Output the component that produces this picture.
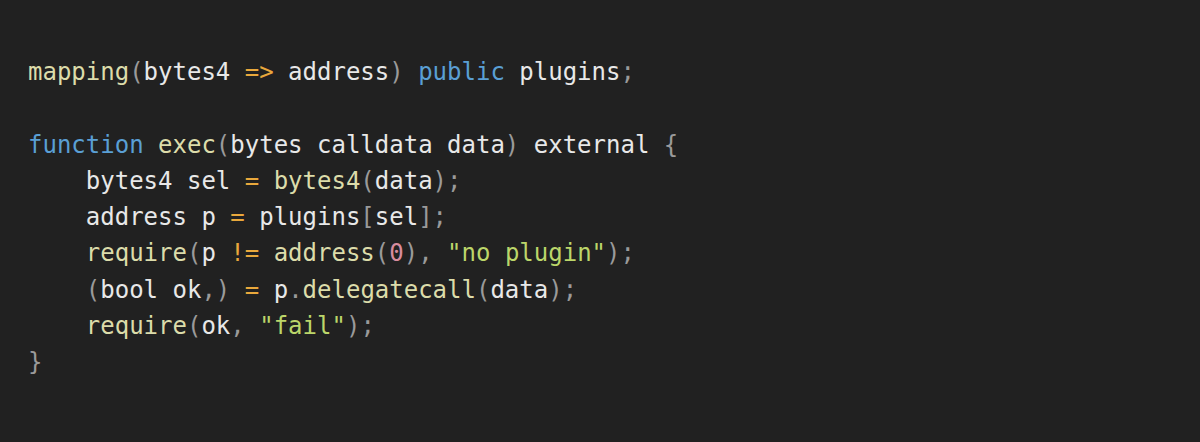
type Tok = [string, string];

const C = {
  kw: "text-[#5a9fd4]",
  fn: "text-[#dcdcaa]",
  op: "text-[#e9a83c]",
  str: "text-[#bcd66a]",
  num: "text-[#d88c9e]",
  pun: "text-[#9a9a9a]",
  id: "text-[#e8e8e8]",
};

const lines: Tok[][] = [
  [
    ["mapping", C.fn], ["(", C.pun], ["bytes4 ", C.id], ["=>", C.op],
    [" address", C.id], [")", C.pun], [" ", C.id], ["public", C.kw],
    [" plugins", C.id], [";", C.pun],
  ],
  [],
  [
    ["function", C.kw], [" ", C.id], ["exec", C.fn], ["(", C.pun],
    ["bytes calldata data", C.id], [")", C.pun], [" external ", C.id], ["{", C.pun],
  ],
  [
    ["    bytes4 sel ", C.id], ["=", C.op], [" ", C.id], ["bytes4", C.fn],
    ["(", C.pun], ["data", C.id], [")", C.pun], [";", C.pun],
  ],
  [
    ["    address p ", C.id], ["=", C.op], [" plugins", C.id], ["[", C.pun],
    ["sel", C.id], ["]", C.pun], [";", C.pun],
  ],
  [
    ["    ", C.id], ["require", C.fn], ["(", C.pun], ["p ", C.id], ["!=", C.op],
    [" ", C.id], ["address", C.fn], ["(", C.pun], ["0", C.num], [")", C.pun],
    [", ", C.pun], ["\"no plugin\"", C.str], [")", C.pun], [";", C.pun],
  ],
  [
    ["    ", C.id], ["(", C.pun], ["bool ok", C.id], [",)", C.pun], [" ", C.id],
    ["=", C.op], [" p", C.id], [".", C.pun], ["delegatecall", C.fn], ["(", C.pun],
    ["data", C.id], [")", C.pun], [";", C.pun],
  ],
  [
    ["    ", C.id], ["require", C.fn], ["(", C.pun], ["ok", C.id], [", ", C.pun],
    ["\"fail\"", C.str], [")", C.pun], [";", C.pun],
  ],
  [["}", C.pun]],
];

export default function App() {
  return (
    <div className="w-[1200px] h-[442px] bg-[#212121] pt-[54px] pl-[28px] overflow-hidden">
      <pre className="font-['DejaVu_Sans_Mono',monospace] text-[24px] leading-[36.3px]">
        {lines.map((line, i) => (
          <div key={i} className="h-[36.3px] whitespace-pre">
            {line.map(([text, cls], j) => (
              <span key={j} className={cls}>
                {text}
              </span>
            ))}
          </div>
        ))}
      </pre>
    </div>
  );
}
